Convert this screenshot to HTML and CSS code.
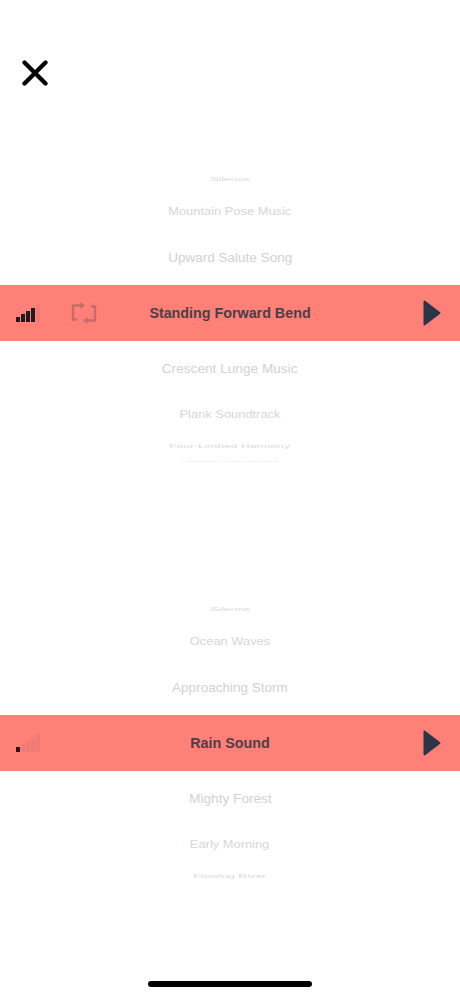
FILE: index.html
```html
<!DOCTYPE html>
<html lang="en">
<head>
<meta charset="utf-8">
<title>Sound picker</title>
<link rel="stylesheet" href="styles.css">
</head>
<body>
<main class="screen">
  <header class="top">
    <svg class="close" width="26" height="26" viewBox="0 0 26 26"><path d="M2.500 2.500 23.500 23.500M23.500 2.500 2.500 23.500" fill="none" stroke="#050505" stroke-width="4.300" stroke-linecap="round"/></svg>
  </header>

  <section class="picker">
    <div class="row r-s"><span>Silence</span></div>
    <div class="row r-m"><span>Mountain Pose Music</span></div>
    <div class="row r-u"><span>Upward Salute Song</span></div>
    <div class="band">
      <svg class="bars" width="24" height="18" viewBox="0 0 24 18">
        <rect class="on" x="0" y="13" width="4" height="5"/>
        <rect class="on" x="5" y="10" width="4" height="8"/>
        <rect class="on" x="10" y="7" width="4" height="11"/>
        <rect class="on" x="15" y="4" width="4" height="14"/>
        <rect class="off" x="20" y="0" width="4" height="18"/>
      </svg>
      <svg class="repeat" width="26" height="22" viewBox="0 0 26 22">
        <path d="M11 3.500H2V17.500H6M15 18.500H24V4.500H20" fill="none" stroke="#c46c67" stroke-width="2.400"/>
        <path d="M9.500 0 14 3.500 9.500 7ZM16.500 15 12 18.500 16.500 22Z" fill="#c46c67"/>
      </svg>
      <strong class="title">Standing Forward Bend</strong>
      <svg class="play" width="18" height="26" viewBox="0 0 18 26"><path d="M1.500 1.500 16.500 13 1.500 24.500Z" fill="#2a3547" stroke="#2a3547" stroke-width="2" stroke-linejoin="round"/></svg>
    </div>
    <div class="row r-c"><span>Crescent Lunge Music</span></div>
    <div class="row r-p"><span>Plank Soundtrack</span></div>
    <div class="row r-f"><span>Four-Limbed Harmony</span></div>
    <div class="row r-e"><span>Upward Facing Dog</span></div>
  </section>

  <section class="picker second">
    <div class="row r-s"><span>Silence</span></div>
    <div class="row r-m"><span>Ocean Waves</span></div>
    <div class="row r-u"><span>Approaching Storm</span></div>
    <div class="band">
      <svg class="bars" width="24" height="18" viewBox="0 0 24 18">
        <rect class="on" x="0" y="13" width="4" height="5"/>
        <rect class="off" x="5" y="10" width="4" height="8"/>
        <rect class="off" x="10" y="7" width="4" height="11"/>
        <rect class="off" x="15" y="4" width="4" height="14"/>
        <rect class="off" x="20" y="0" width="4" height="18"/>
      </svg>
      <strong class="title">Rain Sound</strong>
      <svg class="play" width="18" height="26" viewBox="0 0 18 26"><path d="M1.500 1.500 16.500 13 1.500 24.500Z" fill="#2a3547" stroke="#2a3547" stroke-width="2" stroke-linejoin="round"/></svg>
    </div>
    <div class="row r-c"><span>Mighty Forest</span></div>
    <div class="row r-p"><span>Early Morning</span></div>
    <div class="row r-f"><span>Flowing River</span></div>
  </section>

  <div class="home"></div>
</main>
</body>
</html>
```

FILE: styles.css
```css
* { box-sizing: border-box; }
html, body { margin: 0; padding: 0; background: #fff; }
body { font-family: "Liberation Sans", Arial, sans-serif; }

.screen {
  width: 460px;
  height: 996px;
  display: flex;
  flex-direction: column;
  overflow: hidden;
}

.top {
  height: 170px;
  padding: 60px 0 0 22px;
  flex: none;
}
.close { display: block; }

.picker {
  display: flex;
  flex-direction: column;
  flex: none;
  height: 293px;
}
.second { margin-top: 137px; }

.row {
  display: flex;
  align-items: center;
  justify-content: center;
  flex: none;
  white-space: nowrap;
  font-size: 14px;
}
.row span { display: block; }

.r-s { height: 18px; color: #dadada; }
.r-s span { font-size: 10.500px; transform: scale(1.15, .55); }
.r-m { height: 47px; padding-top: 1px; color: #d6d6d6; }
.r-m span { font-size: 12.500px; transform: scale(1.03, .82); }
.r-u { height: 44px; margin-bottom: 6px; color: #d2d2d2; }
.r-u span { font-size: 14px; transform: scale(.965, .97); }
.r-c { height: 54px; color: #d2d2d2; }
.r-c span { font-size: 14px; transform: scale(.975, .97); }
.r-p { height: 39px; padding-top: 1px; color: #d6d6d6; }
.r-p span { font-size: 12.500px; transform: scale(1.03, .82); }
.r-f { height: 24px; color: #dadada; }
.r-f span { font-size: 10.500px; transform: scale(1.15, .55); }
.r-e { height: 6px; color: #e6e6e6; }
.r-e span { font-size: 10px; transform: scale(1.1, .2); }

.band {
  height: 56px;
  flex: none;
  background: #ff8077;
  display: flex;
  align-items: center;
  position: relative;
  padding: 0 19px 0 16px;
}
.bars { flex: none; }
.on { fill: #1f1a1f; }
.off { fill: #ee7c74; }
.repeat { flex: none; margin-left: 31px; }
.title {
  position: absolute;
  left: 0;
  right: 0;
  text-align: center;
  font-size: 14.300px;
  font-weight: 700;
  color: #4a3f48;
}
.play { flex: none; margin-left: auto; position: relative; }

.home {
  width: 164px;
  height: 6px;
  border-radius: 3px;
  background: #000;
  margin: auto auto 9px;
}
```
